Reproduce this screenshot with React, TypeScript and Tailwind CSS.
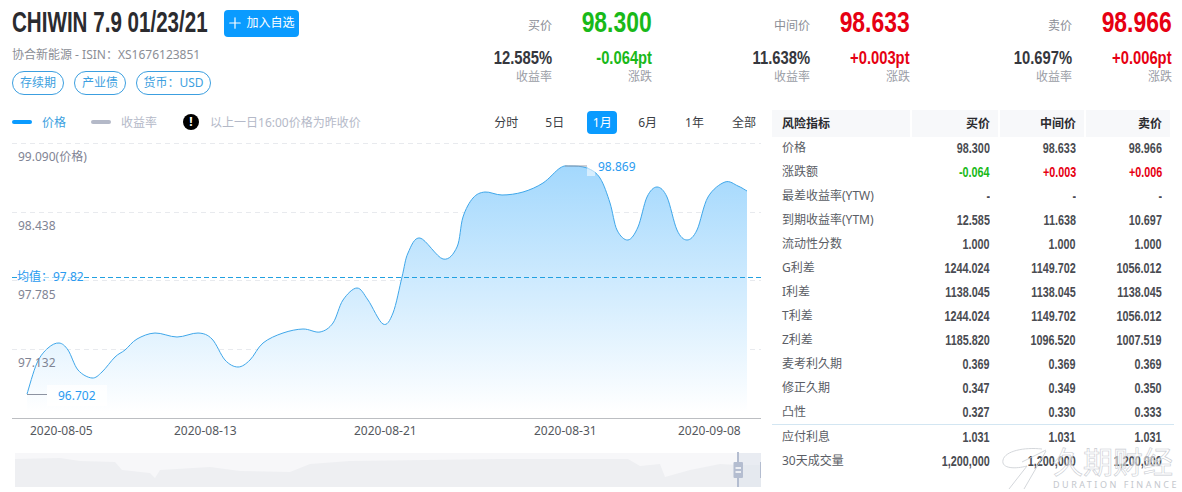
import { Plus } from 'lucide-react';

const pts: [number, number][] = [
  [27, 394], [37, 363], [48, 348], [59, 343], [68, 350], [78, 370], [92, 378], [102, 372], [115, 357], [125, 350],
  [137, 339], [155, 333], [177, 337], [198, 333], [212, 339], [225, 360], [238, 367], [250, 360], [263, 343], [283, 333],
  [303, 329], [320, 332], [333, 323], [343, 300], [357, 288], [368, 300], [383, 324], [393, 313], [402, 277], [408, 253],
  [420, 238], [443, 259], [457, 247], [463, 217], [473, 198], [485, 192], [502, 195], [523, 192], [543, 183], [560, 168],
  [570, 166], [587, 168], [600, 178], [610, 203], [617, 230], [628, 240], [638, 227], [647, 197], [657, 187], [667, 197],
  [677, 230], [687, 240], [697, 230], [708, 197], [725, 182], [738, 186], [747, 191],
];

function smooth(p: [number, number][]) {
  let d = `M${p[0][0]} ${p[0][1]}`;
  for (let i = 0; i < p.length - 1; i++) {
    const a = p[Math.max(i - 1, 0)];
    const b = p[i];
    const c = p[i + 1];
    const e = p[Math.min(i + 2, p.length - 1)];
    const c1x = b[0] + (c[0] - a[0]) / 6;
    const c1y = b[1] + (c[1] - a[1]) / 6;
    const c2x = c[0] - (e[0] - b[0]) / 6;
    const c2y = c[1] - (e[1] - b[1]) / 6;
    d += `C${c1x.toFixed(1)} ${c1y.toFixed(1)} ${c2x.toFixed(1)} ${c2y.toFixed(1)} ${c[0]} ${c[1]}`;
  }
  return d;
}

const line = smooth(pts);
const area = `${line}L747 412L27 412Z`;

const quotes = [
  { width: 'w-[170px]', label: '买价', price: '98.300', yld: '12.585%', chg: '-0.064pt', color: 'text-[#19b919]' },
  { width: 'w-[259px]', label: '中间价', price: '98.633', yld: '11.638%', chg: '+0.003pt', color: 'text-[#e60012]' },
  { width: 'w-[262px]', label: '卖价', price: '98.966', yld: '10.697%', chg: '+0.006pt', color: 'text-[#e60012]' },
];

const rows = [
  ['价格', '98.300', '98.633', '98.966'],
  ['涨跌额', '-0.064', '+0.003', '+0.006'],
  ['最差收益率(YTW)', '-', '-', '-'],
  ['到期收益率(YTM)', '12.585', '11.638', '10.697'],
  ['流动性分数', '1.000', '1.000', '1.000'],
  ['G利差', '1244.024', '1149.702', '1056.012'],
  ['I利差', '1138.045', '1138.045', '1138.045'],
  ['T利差', '1244.024', '1149.702', '1056.012'],
  ['Z利差', '1185.820', '1096.520', '1007.519'],
  ['麦考利久期', '0.369', '0.369', '0.369'],
  ['修正久期', '0.347', '0.349', '0.350'],
  ['凸性', '0.327', '0.330', '0.333'],
  ['应付利息', '1.031', '1.031', '1.031'],
  ['30天成交量', '1,200,000', '1,200,000', '1,200,000'],
];

const sans = "font-['Noto_Sans','Noto_Sans_CJK_SC',sans-serif]";
const narrow = "font-['Liberation_Sans',sans-serif]";

function Chart() {
  const labelFont = { fontFamily: "'Noto Sans','Noto Sans CJK SC',sans-serif" };
  return (
    <svg width="761" height="350" viewBox="0 0 761 350" className="block" style={labelFont}>
      <defs>
        <linearGradient id="fill" x1="0" y1="0" x2="0" y2="1">
          <stop offset="0" stopColor="#a3d8fd" />
          <stop offset="1" stopColor="#ffffff" />
        </linearGradient>
      </defs>
      <g transform="translate(0,-140)">
        {[143.5, 212.5, 280.5, 349.5].map((y) => (
          <line key={y} x1="12" x2="761" y1={y} y2={y} stroke="#e8eaee" strokeDasharray="5 4" />
        ))}
        <path d={area} fill="url(#fill)" />
        <path d={line} fill="none" stroke="#3fa7ea" strokeWidth="1" />
        <line x1="12" x2="761" y1="277.5" y2="277.5" stroke="#22a0e0" strokeDasharray="5 3" />
        <rect x="17" y="268" width="67" height="16" fill="#ffffff" opacity="0.6" />
        <text x="17" y="281" fontSize="12" fill="#2a9bf0">均值：97.82</text>
        <g fontSize="12" fill="#7f8494">
          <text x="18" y="161">99.090(价格)</text>
          <text x="18" y="230">98.438</text>
          <text x="18" y="299">97.785</text>
          <text x="18" y="367">97.132</text>
        </g>
        <line x1="27" x2="47" y1="394.5" y2="394.5" stroke="#8d93a1" />
        <rect x="47" y="385" width="60" height="21" fill="#ffffff" opacity="0.8" />
        <text x="58" y="400" fontSize="12" fill="#2a9bf0">96.702</text>
        <line x1="565" x2="587" y1="166" y2="166" stroke="#9aa0ad" />
        <rect x="587" y="168" width="8" height="8" fill="#ffffff" opacity="0.55" />
        <text x="598" y="171" fontSize="12" fill="#2a9bf0">98.869</text>
        <line x1="12" x2="761" y1="418.5" y2="418.5" stroke="#bcbec2" />
        <g fontSize="12" fill="#55585e">
          <text x="30" y="435">2020-08-05</text>
          <text x="174" y="435">2020-08-13</text>
          <text x="354" y="435">2020-08-21</text>
          <text x="534" y="435">2020-08-31</text>
          <text x="678" y="435">2020-09-08</text>
        </g>
        <rect x="15" y="453" width="746" height="34" fill="#f7f7f9" />
        <path
          d="M15 459L60 458L80 461L115 462L122 470L150 473L155 478L160 470L210 467L240 471L290 472L310 464L350 461L500 459L628 459L640 466L660 464L665 477L690 470L720 464L738 465L761 465L761 487L15 487Z"
          fill="#eeeff2"
        />
        <rect x="738" y="453" width="23" height="34" fill="#dfe3ec" opacity="0.55" />
        <line x1="738" x2="738" y1="452" y2="487" stroke="#b4bdd0" strokeWidth="2" />
        <rect x="733.5" y="462" width="9.5" height="16" rx="1" fill="#b4bdd0" />
        <line x1="735.5" x2="741" y1="468" y2="468" stroke="#ffffff" strokeWidth="1.5" />
        <line x1="735.5" x2="741" y1="472" y2="472" stroke="#ffffff" strokeWidth="1.5" />
        <rect x="760" y="462" width="2" height="16" fill="#b4bdd0" />
      </g>
    </svg>
  );
}

export default function App() {
  return (
    <div className={`relative w-[1182px] h-[492px] overflow-hidden bg-white ${sans}`}>
      {/* Header */}
      <div className="flex h-[110px]">
        <div className="w-[299px] pl-3">
          <div className="flex items-center h-[46px] gap-4">
            <div className="w-[196px]">
              <h1 className={`${narrow} inline-block origin-left scale-x-[.71] text-[29px] leading-none text-[#2b2b2f] font-bold whitespace-nowrap`}>CHIWIN 7.9 01/23/21</h1>
            </div>
            <button className="flex items-center justify-center gap-0.5 pr-0.5 w-[85px] h-[27px] rounded bg-[#0a9bff] text-white text-xs">
              <Plus size={18} strokeWidth={1.6} />
              加入自选
            </button>
          </div>
          <div className="text-xs leading-4 text-[#8b8e96] whitespace-nowrap mt-[1px]">协合新能源 - ISIN：XS1676123851</div>
          <div className="flex gap-2.5 mt-[8px] text-center whitespace-nowrap">
            <span className="w-[52px] h-6 rounded-full border border-[#3c9fe0] text-xs leading-[22px] text-[#3c9fe0]">存续期</span>
            <span className="w-[52px] h-6 rounded-full border border-[#3c9fe0] text-xs leading-[22px] text-[#3c9fe0]">产业债</span>
            <span className="w-[75px] h-6 rounded-full border border-[#3c9fe0] text-xs leading-[22px] text-[#3c9fe0]">货币：USD</span>
          </div>
        </div>
        <div className="w-[182px]" />
        {quotes.map((q) => (
          <div key={q.label} className={`${q.width} grid grid-cols-[1fr_100px] auto-rows-min text-right`}>
            <div className="h-[46px] flex items-center justify-end text-xs text-[#8b8e96] pt-[6px]">{q.label}</div>
            <div className={`h-[46px] flex items-center justify-end ${narrow} font-bold text-[29px] ${q.color}`}>
              <span className="inline-block origin-right scale-x-[.79]">{q.price}</span>
            </div>
            <div className={`${narrow} text-[18px] leading-5 mt-[2px] font-bold text-[#35373d]`}>
              <span className="inline-block origin-right scale-x-[.82]">{q.yld}</span>
            </div>
            <div className={`${narrow} text-[18px] leading-5 mt-[2px] font-bold ${q.color}`}>
              <span className="inline-block origin-right scale-x-[.82]">{q.chg}</span>
            </div>
            <div className="text-xs leading-4 mt-px text-[#9a9da6]">收益率</div>
            <div className="text-xs leading-4 mt-px text-[#9a9da6]">涨跌</div>
          </div>
        ))}
      </div>

      <div className="flex">
        {/* Chart column */}
        <div className="w-[772px]">
          <div className="flex items-center h-[24px] pl-3 pr-4 text-xs">
            <span className="w-5 h-1 rounded-full bg-[#0a9bff]" />
            <span className="ml-2.5 pt-px text-[#3c9fe0]">价格</span>
            <span className="ml-[25px] w-5 h-1 rounded-full bg-[#b4b9c8]" />
            <span className="ml-2.5 pt-px text-[#b4b9c8]">收益率</span>
            <span className="ml-[26px] w-4 h-4 rounded-full bg-black text-white text-[12px] leading-4 font-bold text-center">!</span>
            <span className="ml-[11px] pt-px text-[#b4b9c8]">以上一日16:00价格为昨收价</span>
            <div className="ml-auto pt-px flex items-center text-[#3a3d44]">
              <span className="mr-[27px]">分时</span>
              <span className="mr-[23px]">5日</span>
              <span className="mr-[21px] w-[30px] h-[23px] rounded bg-[#0a9bff] text-white leading-[23px] text-center">1月</span>
              <span className="mr-[28px]">6月</span>
              <span className="mr-[28px]">1年</span>
              <span>全部</span>
            </div>
          </div>
          <div className="mt-[6px]">
            <Chart />
          </div>
        </div>

        {/* Risk table */}
        <div className="w-[402px] text-xs">
          <div className="grid grid-cols-[138px_86px_84px_84px] gap-x-[2px] h-[26px] font-bold text-[#2b2b2f] leading-[27px]">
            <div className="bg-[#f7f8fa] pl-[10px]">风险指标</div>
            <div className="bg-[#f7f8fa] pr-2 text-right">买价</div>
            <div className="bg-[#f7f8fa] pr-2 text-right">中间价</div>
            <div className="bg-[#f7f8fa] pr-2 text-right">卖价</div>
          </div>
          {rows.map((r, i) => (
            <div
              key={r[0]}
              className={`grid grid-cols-[138px_86px_84px_84px] gap-x-[2px] h-6 leading-6 ${i === 12 ? 'border-t border-[#d3e6f2] h-[25px]' : ''}`}
            >
              <div className="pl-[10px] text-[#5a5d65] whitespace-nowrap">{r[0]}</div>
              {r.slice(1).map((v, j) => (
                <div
                  key={j}
                  className={`${narrow} text-[15px] pr-2 text-right font-bold ${i === 1 ? (j === 0 ? 'text-[#19b919]' : 'text-[#e60012]') : 'text-[#4a4c52]'}`}
                >
                  <span className="inline-block origin-right scale-x-[.72]">{v}</span>
                </div>
              ))}
            </div>
          ))}
        </div>
      </div>

      {/* Watermark */}
      <div className="absolute left-[1000px] top-[446px] w-[182px] h-[46px] pointer-events-none">
        <svg width="52" height="46" viewBox="0 0 52 46" className="absolute left-0 top-0">
          <path d="M42 3C24 1 5 5 3 14C1 23 16 23 27 20L9 43M22 16L46 4M46 5L24 43" fill="none" stroke="#cfd2d7" strokeWidth="0.9" />
        </svg>
        <div className="absolute left-[53px] top-[-2px] text-[30px] leading-9 whitespace-nowrap text-white/50 [-webkit-text-stroke:0.6px_#c9ccd2]">久期财经</div>
        <div className="absolute left-[53px] top-[33px] text-[9px] leading-3 tracking-[2.5px] whitespace-nowrap text-[#c4c7cd]">DURATION FINANCE</div>
      </div>
    </div>
  );
}
